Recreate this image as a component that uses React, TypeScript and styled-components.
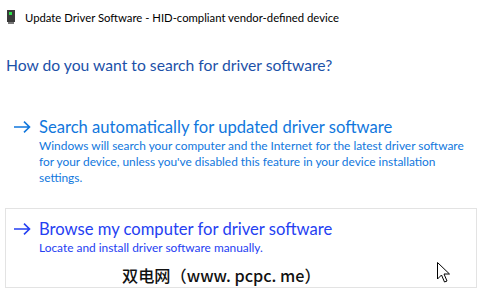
import React from "react";
import styled, { createGlobalStyle } from "styled-components";

const GlobalStyle = createGlobalStyle`
  html, body {
    margin: 0;
    padding: 0;
    background: #fff;
  }
  body {
    font-family: Lato, "Noto Sans", sans-serif;
  }
`;

const Window = styled.div`
  position: relative;
  width: 489px;
  height: 297px;
  background: #fff;
  overflow: hidden;
  display: flex;
  flex-direction: column;
`;

const TitleBar = styled.div`
  display: flex;
  align-items: center;
  gap: 10px;
  height: 34px;
  padding-left: 7px;
  font-size: 11.3px;
  color: #000;
`;

const Heading = styled.div`
  margin: 22px 0 0 6px;
  font-size: 15.7px;
  color: #1c51a8;
`;

const Options = styled.div`
  display: flex;
  flex-direction: column;
  gap: 9px;
  margin-top: 32px;
  padding: 0 12px 0 5px;
`;

const Option = styled.div<{ $hover?: boolean }>`
  display: flex;
  align-items: flex-start;
  gap: 8px;
  padding: 9px 8px 12px 8px;
  border: 1px solid ${(p) => (p.$hover ? "#e3e3e3" : "transparent")};
  color: ${(p) => (p.$hover ? "#2540f2" : "#1177dd")};
  height: ${(p) => (p.$hover ? "57px" : "auto")};
`;

const Arrow = styled.svg`
  flex: none;
  margin-top: 5px;
`;

const OptionText = styled.div`
  display: flex;
  flex-direction: column;
`;

const OptionTitle = styled.div`
  font-size: 16.6px;
  line-height: 22px;
`;

const OptionDesc = styled.div`
  font-size: 11.9px;
  line-height: 16px;
`;

const Watermark = styled.div`
  position: absolute;
  left: 122px;
  top: 263px;
  font-family: "Noto Sans CJK SC", sans-serif;
  font-size: 16.2px;
  font-weight: 500;
  color: #111;
  text-shadow: 0 0 1px #fff;
`;

const Cursor = styled.svg`
  position: absolute;
  left: 437px;
  top: 262px;
`;

function DeviceIcon() {
  return (
    <svg width="8" height="14" viewBox="0 0 8 14">
      <rect x="0" y="0" width="8" height="12" fill="#3a3a3a" />
      <rect x="2" y="2" width="3" height="3" fill="#2ee04a" />
      <rect x="1" y="12" width="6" height="2" fill="#777" />
    </svg>
  );
}

function ArrowIcon() {
  return (
    <Arrow width="17" height="12" viewBox="0 0 17 12">
      <path d="M0 6 H15.5 M10 0.7 L15.5 6 L10 11.3" fill="none" stroke="currentColor" strokeWidth="1.6" />
    </Arrow>
  );
}

export default function App() {
  return (
    <>
      <GlobalStyle />
      <Window>
        <TitleBar>
          <DeviceIcon />
          <span>Update Driver Software - HID-compliant vendor-defined device</span>
        </TitleBar>
        <Heading>How do you want to search for driver software?</Heading>
        <Options>
          <Option>
            <ArrowIcon />
            <OptionText>
              <OptionTitle>Search automatically for updated driver software</OptionTitle>
              <OptionDesc>
                Windows will search your computer and the Internet for the latest driver software
                <br />
                for your device, unless you've disabled this feature in your device installation
                <br />
                settings.
              </OptionDesc>
            </OptionText>
          </Option>
          <Option $hover>
            <ArrowIcon />
            <OptionText>
              <OptionTitle>Browse my computer for driver software</OptionTitle>
              <OptionDesc>Locate and install driver software manually.</OptionDesc>
            </OptionText>
          </Option>
        </Options>
        <Watermark>双电网（www. pcpc. me）</Watermark>
        <Cursor width="13" height="21" viewBox="0 0 13 21">
          <path d="M0.5 0.5 V17 L4.5 13 L7.5 20 L10 19 L7 12 L12.5 12 Z" fill="#fff" stroke="#000" strokeWidth="1" />
        </Cursor>
      </Window>
    </>
  );
}
